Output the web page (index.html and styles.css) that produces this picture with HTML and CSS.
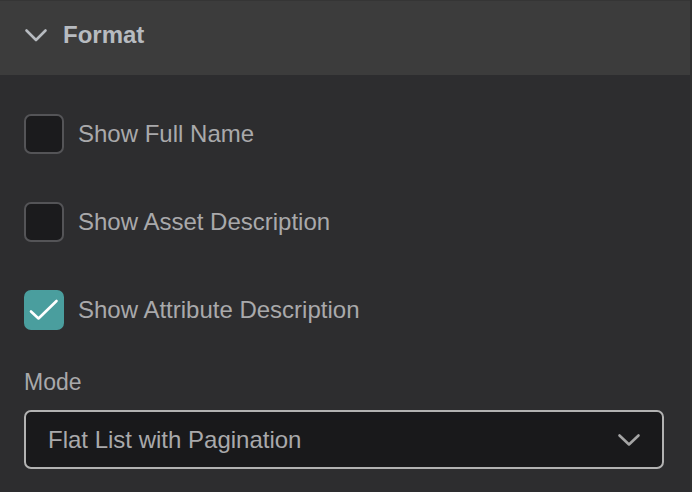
FILE: index.html
```html
<!DOCTYPE html>
<html lang="en">
<head>
<meta charset="utf-8">
<title>Format</title>
<link rel="stylesheet" href="styles.css">
</head>
<body>
<section class="panel">
  <header class="panel-header">
    <svg class="header-chevron" width="24" height="24" viewBox="0 0 24 24" aria-hidden="true">
      <path d="M2.5 7.5 L12 17 L21.5 7.5" fill="none" stroke="currentColor" stroke-width="2.6" stroke-linecap="round" stroke-linejoin="round"/>
    </svg>
    <h2 class="panel-title">Format</h2>
  </header>
  <div class="panel-body">
    <label class="check-row">
      <span class="checkbox"></span>
      <span class="check-label">Show Full Name</span>
    </label>
    <label class="check-row">
      <span class="checkbox"></span>
      <span class="check-label">Show Asset Description</span>
    </label>
    <label class="check-row">
      <span class="checkbox checked">
        <svg width="40" height="40" viewBox="0 0 40 40" aria-hidden="true">
          <path d="M7 21.5 L14.5 28.5 L32.5 11" fill="none" stroke="#ffffff" stroke-width="2.6" stroke-linecap="round" stroke-linejoin="round"/>
        </svg>
      </span>
      <span class="check-label">Show Attribute Description</span>
    </label>
    <div class="field">
      <div class="field-label">Mode</div>
      <div class="select">
        <span class="select-value">Flat List with Pagination</span>
        <svg class="select-chevron" width="24" height="24" viewBox="0 0 24 24" aria-hidden="true">
          <path d="M2.5 7.5 L12 16.5 L21.5 7.5" fill="none" stroke="currentColor" stroke-width="2.6" stroke-linecap="round" stroke-linejoin="round"/>
        </svg>
      </div>
    </div>
  </div>
</section>
</body>
</html>
```

FILE: styles.css
```css
html, body {
  margin: 0;
  padding: 0;
}

body {
  background: #2d2d2f;
  font-family: "Liberation Sans", Arial, sans-serif;
  width: 692px;
  height: 492px;
  overflow: hidden;
}

.panel {
  display: flex;
  flex-direction: column;
  border-right: 2px solid #303030;
  min-height: 492px;
  box-sizing: border-box;
}

.panel-header {
  display: flex;
  align-items: center;
  gap: 15px;
  height: 75px;
  box-sizing: border-box;
  padding: 0 0 6px 24px;
  background: #3c3c3c;
  border-top: 1px solid #353535;
  color: #b7bbc0;
}

.header-chevron {
  display: block;
  flex: none;
}

.panel-title {
  margin: 0;
  font-size: 24px;
  font-weight: 700;
  line-height: 28px;
  color: #b7bbc0;
}

.panel-body {
  display: flex;
  flex-direction: column;
  padding: 39px 26px 0 24px;
}

.check-row {
  display: flex;
  align-items: center;
  gap: 14px;
  height: 40px;
  margin-bottom: 48px;
}

.check-row:nth-of-type(3) {
  margin-bottom: 38px;
}

.checkbox {
  flex: none;
  width: 40px;
  height: 40px;
  box-sizing: border-box;
  border: 2px solid #545457;
  border-radius: 7px;
  background: #1b1b1d;
}

.checkbox.checked {
  border: none;
  background: #4a9e9e;
}

.checkbox svg {
  display: block;
}

.check-label {
  font-size: 24px;
  line-height: 28px;
  color: #a9a9ab;
}

.field {
  display: flex;
  flex-direction: column;
  gap: 14px;
}

.field-label {
  font-size: 23px;
  line-height: 28px;
  color: #a9a9ab;
}

.select {
  display: flex;
  align-items: center;
  justify-content: space-between;
  height: 59px;
  box-sizing: border-box;
  padding: 0 21px 0 22px;
  border: 2px solid #b2b2b2;
  border-radius: 7px;
  background: #19191b;
  color: #a5a5a5;
}

.select-value {
  font-size: 24px;
  line-height: 28px;
  color: #a9a9ab;
}

.select-chevron {
  display: block;
  flex: none;
}
```
